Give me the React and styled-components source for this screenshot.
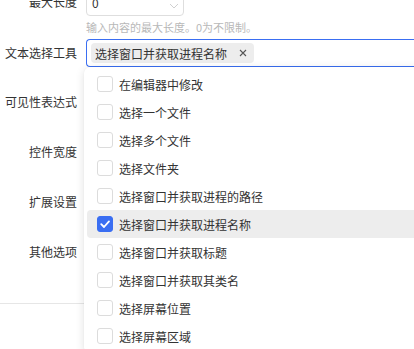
import React from "react";
import styled, { createGlobalStyle } from "styled-components";

const Global = createGlobalStyle`
  html, body { margin: 0; padding: 0; background: #fff; overflow: hidden; }
  body {
    font-family: "Noto Sans CJK SC", "Noto Sans", sans-serif;
    font-size: 12px;
    color: #333;
  }
`;

const Page = styled.div`
  margin-top: -12px;
  width: 414px;
  height: 361px;
  overflow: hidden;
`;

const FormItem = styled.div`
  display: grid;
  grid-template-columns: 77px 1fr;
  column-gap: 9px;
  margin-bottom: ${(p) => p.$mb ?? 22}px;
`;

const Label = styled.div`
  height: 28px;
  line-height: 28px;
  text-align: right;
  color: #333;
  font-size: 12px;
  white-space: nowrap;
`;

const Control = styled.div`
  position: relative;
  min-height: 28px;
`;

const NumberBox = styled.div`
  box-sizing: border-box;
  width: 98px;
  height: 28px;
  border: 1px solid #dedede;
  border-radius: 4px;
  display: flex;
  align-items: center;
  padding-left: 5px;
  font-size: 12px;
  color: #333;
`;

const NumValue = styled.span`
  flex: 1;
`;

const Spinner = styled.div`
  display: flex;
  flex-direction: column;
  align-items: center;
  justify-content: center;
  gap: 2px;
  width: 16px;
  margin-right: 1px;
`;

const Help = styled.div`
  margin-top: 3px;
  font-size: 11px;
  line-height: 16px;
  color: #b8b8b8;
  white-space: nowrap;
`;

const SelectBox = styled.div`
  box-sizing: border-box;
  height: 28px;
  width: 340px;
  border: 1px solid #3a6ef2;
  border-radius: 4px 0 0 4px;
  border-right: none;
  display: flex;
  align-items: center;
  padding-left: 4px;
`;

const Tag = styled.span`
  display: inline-flex;
  align-items: center;
  height: 20px;
  padding: 0 7px 0 4px;
  gap: 12px;
  background: #ededed;
  border-radius: 4px;
  font-size: 12px;
  color: #333;
  white-space: nowrap;
`;

const Dropdown = styled.div`
  position: absolute;
  left: -2px;
  top: 28px;
  width: 340px;
  box-sizing: border-box;
  padding: 3px;
  background: #fff;
  border-radius: 6px;
  box-shadow: 0 2px 10px rgba(0, 0, 0, 0.12), 0 0 1px rgba(0, 0, 0, 0.08);
  z-index: 5;
`;

const Option = styled.div`
  display: flex;
  align-items: center;
  height: 28px;
  padding-left: 10px;
  gap: 6px;
  border-radius: 4px;
  background: ${(p) => (p.$selected ? "#ededed" : "transparent")};
  font-size: 12px;
  color: #333;
  white-space: nowrap;
`;

const Check = styled.span`
  box-sizing: border-box;
  width: 16px;
  height: 16px;
  border-radius: 3px;
  border: 1px solid ${(p) => (p.$on ? "#3a6ef2" : "#dcdcdc")};
  background: ${(p) => (p.$on ? "#3a6ef2" : "#fff")};
  display: inline-flex;
  align-items: center;
  justify-content: center;
  flex: none;
`;

const Divider = styled.div`
  height: 1px;
  background: #e6e6e6;
  margin-top: 37px;
`;

const Chevron = ({ up }) => (
  <svg width="10" height="6" viewBox="0 0 10 6">
    <path
      d={up ? "M1 5 L5 1 L9 5" : "M1 1 L5 5 L9 1"}
      fill="none"
      stroke="#d0d0d0"
      strokeWidth="1"
    />
  </svg>
);

const options = [
  "在编辑器中修改",
  "选择一个文件",
  "选择多个文件",
  "选择文件夹",
  "选择窗口并获取进程的路径",
  "选择窗口并获取进程名称",
  "选择窗口并获取标题",
  "选择窗口并获取其类名",
  "选择屏幕位置",
  "选择屏幕区域",
];

export default function App() {
  return (
    <>
      <Global />
      <Page>
        <FormItem $mb={4}>
          <Label>最大长度</Label>
          <Control>
            <NumberBox>
              <NumValue>0</NumValue>
              <Spinner>
                <Chevron up />
                <Chevron />
              </Spinner>
            </NumberBox>
            <Help>输入内容的最大长度。0为不限制。</Help>
          </Control>
        </FormItem>
        <FormItem $mb={21}>
          <Label>文本选择工具</Label>
          <Control>
            <SelectBox>
              <Tag>
                选择窗口并获取进程名称
                <svg width="8" height="8" viewBox="0 0 8 8">
                  <path d="M1 1 L7 7 M7 1 L1 7" stroke="#555" strokeWidth="1.1" />
                </svg>
              </Tag>
            </SelectBox>
            <Dropdown>
              {options.map((o) => {
                const on = o === "选择窗口并获取进程名称";
                return (
                  <Option key={o} $selected={on}>
                    <Check $on={on}>
                      {on && (
                        <svg width="12" height="12" viewBox="0 0 12 12">
                          <path
                            d="M2.2 6.2 L5 9 L10 3.4"
                            fill="none"
                            stroke="#fff"
                            strokeWidth="1.8"
                            strokeLinecap="round"
                            strokeLinejoin="round"
                          />
                        </svg>
                      )}
                    </Check>
                    {o}
                  </Option>
                );
              })}
            </Dropdown>
          </Control>
        </FormItem>
        <FormItem>
          <Label>可见性表达式</Label>
          <Control />
        </FormItem>
        <FormItem>
          <Label>控件宽度</Label>
          <Control />
        </FormItem>
        <FormItem>
          <Label>扩展设置</Label>
          <Control />
        </FormItem>
        <FormItem $mb={0}>
          <Label>其他选项</Label>
          <Control />
        </FormItem>
        <Divider />
      </Page>
    </>
  );
}
